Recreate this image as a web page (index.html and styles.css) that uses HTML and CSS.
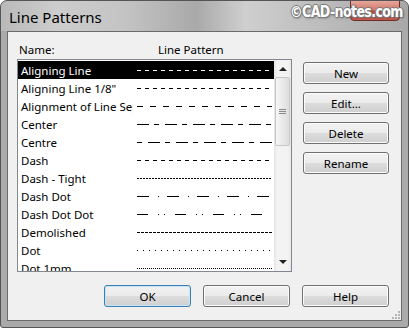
FILE: index.html
```html
<!DOCTYPE html>
<html lang="en">
<head>
  <meta charset="UTF-8">
  <meta name="viewport" content="width=device-width, initial-scale=1.0">
  <title>Line Patterns</title>
  <link rel="stylesheet" href="styles.css">
</head>
<body>
  <div class="window">
    <div class="titlebar">
      <span class="title">Line Patterns</span>
      <span class="close"></span>
      <span class="watermark">©CAD-notes.com</span>
    </div>

    <div class="client">
      <div class="main">
        <div class="listcol">
          <div class="header">
            <span class="col-name">Name:</span>
            <span class="col-pat">Line Pattern</span>
          </div>
          <div class="listbox">
            <div class="rows">
              <div class="row selected"><span class="name">Aligning Line</span><span class="pat p-dash"></span></div>
              <div class="row"><span class="name">Aligning Line 1/8"</span><span class="pat p-dash"></span></div>
              <div class="row"><span class="name">Alignment of Line Separation</span><span class="pat p-align"></span></div>
              <div class="row"><span class="name">Center</span><span class="pat p-center"></span></div>
              <div class="row"><span class="name">Centre</span><span class="pat p-centre"></span></div>
              <div class="row"><span class="name">Dash</span><span class="pat p-dash"></span></div>
              <div class="row"><span class="name">Dash - Tight</span><span class="pat p-tight"></span></div>
              <div class="row"><span class="name">Dash Dot</span><span class="pat p-dashdot"></span></div>
              <div class="row"><span class="name">Dash Dot Dot</span><span class="pat p-dashdotdot"></span></div>
              <div class="row"><span class="name">Demolished</span><span class="pat p-demo"></span></div>
              <div class="row"><span class="name">Dot</span><span class="pat p-dot"></span></div>
              <div class="row"><span class="name">Dot 1mm</span><span class="pat p-dot1"></span></div>
            </div>
            <div class="scrollbar">
              <div class="sb-btn up"></div>
              <div class="sb-thumb"><span class="grip-lines"></span></div>
              <div class="sb-track"></div>
              <div class="sb-btn down"></div>
            </div>
          </div>
        </div>

        <div class="side">
          <button type="button">New</button>
          <button type="button">Edit...</button>
          <button type="button">Delete</button>
          <button type="button">Rename</button>
        </div>
      </div>

      <div class="footer">
        <button type="button" class="default">OK</button>
        <button type="button">Cancel</button>
        <button type="button">Help</button>
      </div>

      <svg class="size-grip" width="8" height="8" viewBox="0 0 8 8">
        <rect x="6" y="0" width="2" height="2" fill="#b5b5b5"/>
        <rect x="3" y="3" width="2" height="2" fill="#b5b5b5"/>
        <rect x="6" y="3" width="2" height="2" fill="#b5b5b5"/>
        <rect x="0" y="6" width="2" height="2" fill="#b5b5b5"/>
        <rect x="3" y="6" width="2" height="2" fill="#b5b5b5"/>
        <rect x="6" y="6" width="2" height="2" fill="#b5b5b5"/>
      </svg>
    </div>
  </div>
</body>
</html>
```

FILE: styles.css
```css
body {
  margin: 0;
  font-family: "Noto Sans", "Open Sans", sans-serif;
  font-size: 11.5px;
  background: #fff;
}
.window {
  position: relative;
  width: 409px;
  height: 328px;
  box-sizing: border-box;
  border: 1px solid #555;
  border-radius: 7px 7px 3px 3px;
  background: #aaaaaa;
  padding: 0 6px 6px;
  display: flex;
  flex-direction: column;
  overflow: hidden;
}
.titlebar {
  height: 30px;
  margin: 0 -6px;
  padding: 0 8px;
  border-radius: 6px 6px 0 0;
  background: linear-gradient(to right, #b9b9b9 0%, #cdcdcd 14%, #c4c4c4 30%, #a9a9a9 48%, #cfcfcf 60%, #bdbdbd 78%, #a8a8a8 100%);
}
.title {
  display: block;
  font-size: 15px;
  line-height: 30px;
  padding-top: 1px;
  color: #000;
}
.close {
  position: absolute;
  left: 349px;
  top: -1px;
  width: 50px;
  height: 21px;
  box-sizing: border-box;
  border: 1px solid #6b3027;
  border-radius: 0 0 4px 4px;
  background: linear-gradient(#e7a79c, #d27c70 45%, #c0493d 55%, #c9584c);
}
.watermark {
  position: absolute;
  left: 289px;
  top: 0;
  white-space: nowrap;
  font-family: "DejaVu Sans Condensed", "DejaVu Sans", sans-serif;
  font-weight: bold;
  font-size: 14px;
  line-height: 18px;
  letter-spacing: -0.6px;
  transform: scaleY(1.15);
  transform-origin: left top;
  color: #fff;
  text-shadow: 1px 0 #7a7a7a, -1px 0 #7a7a7a, 0 1px #7a7a7a, 0 -1px #7a7a7a, 1px 1px 2px #555;
}
.client {
  position: relative;
  flex: 1;
  border: 1px solid #6a6a6a;
  background: #f0f0f0;
  padding: 8px 12px 0 9px;
}
.main {
  display: flex;
  gap: 11px;
}
.listcol {
  width: 275px;
}
.header {
  display: flex;
  height: 19px;
  line-height: 19px;
}
.col-name {
  width: 139px;
  padding-left: 2px;
}
.listbox {
  display: flex;
  height: 213px;
  box-sizing: border-box;
  border: 1px solid #828790;
  background: #fff;
}
.rows {
  flex: 1;
  padding-top: 1px;
  overflow: hidden;
}
.row {
  display: flex;
  align-items: center;
  height: 18px;
  --c: #000;
}
.row.selected {
  background: #000;
  color: #fff;
  --c: #fff;
}
.name {
  width: 112px;
  padding-left: 3px;
  white-space: nowrap;
  overflow: hidden;
}
.pat {
  width: 135px;
  height: 1px;
  margin-left: 4px;
  margin-top: 1px;
}
.p-dash {
  background: repeating-linear-gradient(90deg, var(--c) 0 4px, transparent 4px 8px);
}
.p-align {
  background: repeating-linear-gradient(90deg, var(--c) 0 6px, transparent 6px 13px);
}
.p-center {
  background: repeating-linear-gradient(90deg, var(--c) 0 12px, transparent 12px 17px, var(--c) 17px 22px, transparent 22px 28px);
}
.p-centre {
  background: repeating-linear-gradient(90deg, var(--c) 0 5px, transparent 5px 11px, var(--c) 11px 23px, transparent 23px 28px);
}
.p-tight {
  background: repeating-linear-gradient(90deg, var(--c) 0 2px, transparent 2px 3px);
}
.p-dashdot {
  background: repeating-linear-gradient(90deg, var(--c) 0 12px, transparent 12px 21px, var(--c) 21px 22px, transparent 22px 30px);
}
.p-dashdotdot {
  background: repeating-linear-gradient(90deg, var(--c) 0 11px, transparent 11px 21px, var(--c) 21px 22px, transparent 22px 27px, var(--c) 27px 28px, transparent 28px 38px);
}
.p-demo {
  background: repeating-linear-gradient(90deg, var(--c) 0 3px, transparent 3px 4px);
}
.p-dot {
  background: repeating-linear-gradient(90deg, var(--c) 0 1px, transparent 1px 6px);
}
.p-dot1 {
  background: repeating-linear-gradient(90deg, var(--c) 0 1px, transparent 1px 2px);
}
.scrollbar {
  width: 17px;
  display: flex;
  flex-direction: column;
  background: linear-gradient(to right, #e4e4e4, #f3f3f3 3px, #f3f3f3 14px, #e8e8e8);
}
.sb-btn {
  height: 17px;
  position: relative;
}
.sb-btn::after {
  content: "";
  position: absolute;
  left: 5px;
  top: 7px;
  border-left: 4px solid transparent;
  border-right: 4px solid transparent;
}
.sb-btn.up::after {
  border-bottom: 4px solid #222;
}
.sb-btn.down::after {
  top: 6px;
  border-top: 4px solid #222;
}
.sb-thumb {
  height: 69px;
  margin: 0 1px;
  box-sizing: border-box;
  border: 1px solid #c6c6c6;
  border-radius: 2px;
  background: linear-gradient(to right, #f7f7f7, #e9e9e9 50%, #dedede);
  display: flex;
  align-items: center;
  justify-content: center;
}
.grip-lines {
  width: 7px;
  height: 5px;
  background: repeating-linear-gradient(#8a8a8a 0 1px, transparent 1px 2px);
}
.sb-track {
  flex: 1;
}
.side {
  display: flex;
  flex-direction: column;
  gap: 8px;
  padding-top: 22px;
}
button {
  font-family: "Noto Sans", "Open Sans", sans-serif;
  font-size: 11.5px;
  color: #000;
  height: 22px;
  padding: 0;
  border: 1px solid #707070;
  border-radius: 3px;
  background: linear-gradient(#f2f2f2 0%, #ebebeb 50%, #dddddd 50%, #cfcfcf 100%);
  box-shadow: inset 0 0 0 1px #fcfcfc;
}
.side button {
  width: 86px;
}
.footer {
  display: flex;
  justify-content: flex-end;
  gap: 12px;
  margin-top: 13px;
}
.footer button {
  width: 87px;
}
button.default {
  border-color: #3c7fb1;
  box-shadow: inset 0 0 0 1px #c4e5f6;
}
.size-grip {
  position: absolute;
  right: 1px;
  bottom: 1px;
}
```
